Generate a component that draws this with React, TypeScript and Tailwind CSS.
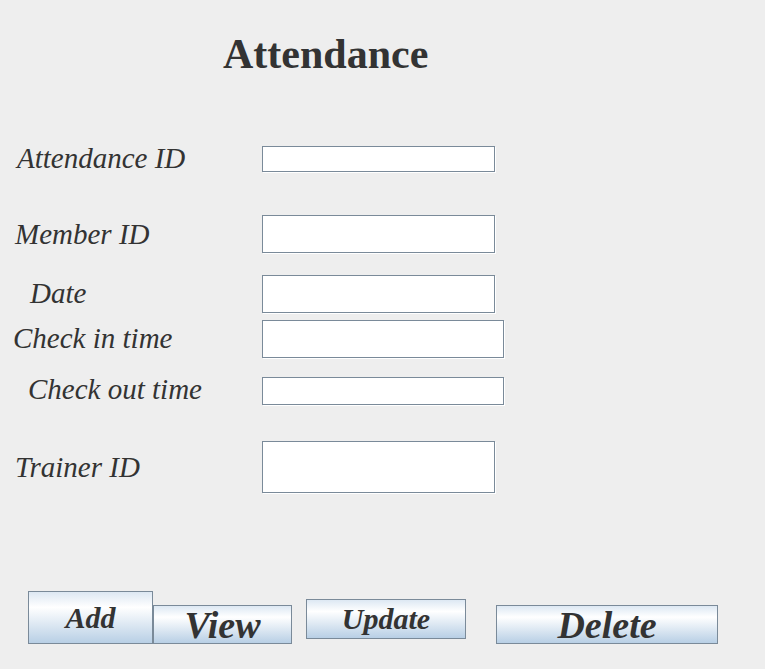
export default function App() {
  const rows = [
    { label: 'Attendance ID', lx: 17, lmt: 0, fmt: 4, fw: 233, fh: 26, h: 73 },
    { label: 'Member ID', lx: 15, lmt: 3, fmt: 0, fw: 233, fh: 38, h: 60 },
    { label: 'Date', lx: 30, lmt: 2, fmt: 0, fw: 233, fh: 38, h: 45 },
    { label: 'Check in time', lx: 13, lmt: 2, fmt: 0, fw: 242, fh: 38, h: 53 },
    { label: 'Check out time', lx: 28, lmt: 0, fmt: 4, fw: 242, fh: 28, h: 68 },
    { label: 'Trainer ID', lx: 15, lmt: 10, fmt: 0, fw: 233, fh: 52, h: 52 },
  ];

  const btn =
    'flex items-center justify-center border border-[#7a8a99] bg-[linear-gradient(to_bottom,#dde8f3_0%,#ffffff_30%,#b8cfe5_100%)] font-bold italic text-[#333333] leading-none';

  return (
    <div className="w-[765px] h-[669px] bg-[#eeeeee] overflow-hidden font-['Liberation_Serif',serif] text-[#333333]">
      {/* Title */}
      <div className="pt-[33px] pl-[223px] text-[42px] font-bold leading-none">Attendance</div>

      {/* Form rows */}
      <div className="mt-[68px]">
        {rows.map((r) => (
          <div key={r.label} className="flex items-start" style={{ height: r.h }}>
            <div
              className="w-[262px] shrink-0 text-[29px] italic leading-none whitespace-nowrap"
              style={{ paddingLeft: r.lx, marginTop: r.lmt + 1 }}
            >
              {r.label}
            </div>
            <div
              className="bg-white border border-[#7a8a99] shadow-[1px_1px_0_#ffffff]"
              style={{ width: r.fw, height: r.fh, marginTop: r.fmt - 1 }}
            />
          </div>
        ))}
      </div>

      {/* Buttons */}
      <div className="mt-[97px] flex items-start pl-[28px]">
        <button className={`${btn} w-[125px] h-[53px] text-[30px]`}>Add</button>
        <button className={`${btn} mt-[14px] w-[139px] h-[39px] text-[38px]`}>View</button>
        <button className={`${btn} ml-[14px] mt-[8px] w-[160px] h-[40px] text-[30px]`}>Update</button>
        <button className={`${btn} ml-[30px] mt-[14px] w-[222px] h-[39px] text-[38px]`}>Delete</button>
      </div>
    </div>
  );
}
